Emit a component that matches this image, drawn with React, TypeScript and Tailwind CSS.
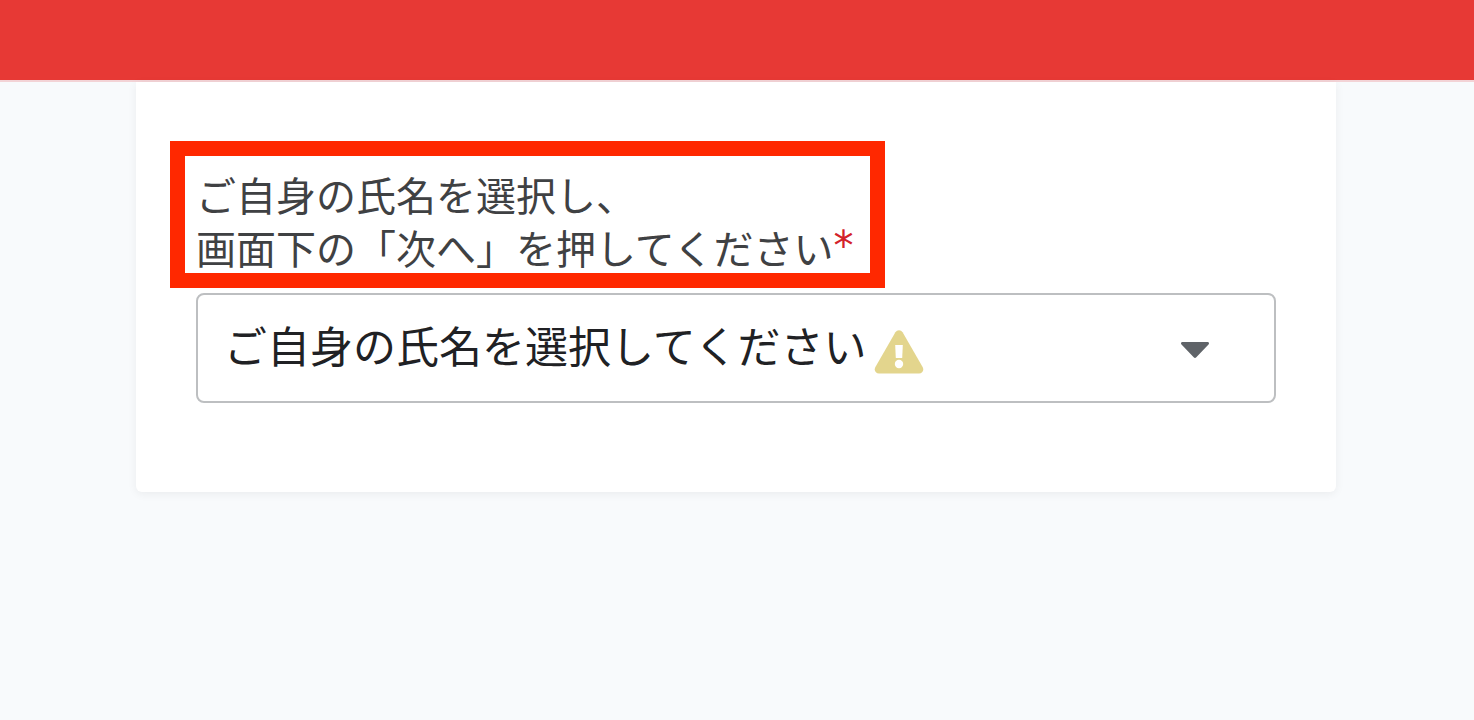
const names = ['ご自身の氏名を選択してください'];

function WarningIcon() {
  return (
    <svg viewBox="0 0 50 44" className="h-11 w-[50px]" aria-hidden="true">
      <path
        d="M21.4 2.3a4.3 4.3 0 0 1 7.2 0l20 34.8c1.8 3.2-.2 6.4-3.6 6.4H5c-3.4 0-5.4-3.2-3.6-6.4z"
        fill="#e3d58d"
      />
      <path d="M21.200 15h7.600l-.6 13h-6.400z" fill="#fff" />
      <circle cx="25" cy="34" r="4.200" fill="#fff" />
    </svg>
  );
}

function NameSelect() {
  return (
    <div className="relative">
      <select
        id="name"
        required
        className="block h-[110px] w-full appearance-none rounded-lg border-2 border-[#bdbfc1] bg-white pr-24 pb-2 pl-[26px] text-[43px] text-[#202124]"
      >
        {names.map((n) => (
          <option key={n}>{n}</option>
        ))}
      </select>
      <span className="pointer-events-none absolute top-[37px] left-[678px]">
        <WarningIcon />
      </span>
      <svg
        viewBox="0 0 28 16"
        className="pointer-events-none absolute top-[49px] right-[67px] h-4 w-7"
        aria-hidden="true"
      >
        <path d="M1.5 0h25c1.4 0 2 1.5 1 2.5L15.3 15.3a1.8 1.8 0 0 1-2.6 0L.5 2.5C-.5 1.5.1 0 1.5 0z" fill="#5f6368" />
      </svg>
    </div>
  );
}

export default function App() {
  return (
    <div className="min-h-screen bg-[#f8fafc] font-['Noto_Sans_CJK_JP',sans-serif]">
      <header className="h-[82px] border-b-2 border-[#f3d3d6] bg-[#e73935]" />

      <main className="pr-0.5">
        <form className="mx-auto max-w-[1200px] rounded-b-md bg-white px-[60px] pt-[86px] pb-[89px] shadow-[0_2px_10px_rgba(0,0,0,0.06)]">
          <div className="relative mb-[19px] w-fit">
            <label htmlFor="name" className="block text-[40px] leading-[53px] text-[#3f4143]">
              ご自身の氏名を選択し、
              <br />
              画面下の「次へ」を押してください
              <span className="align-[4px] font-['DejaVu_Sans',sans-serif] text-[40px] leading-none text-[#d3222a]">*</span>
            </label>
            {/* highlight frame */}
            <div className="pointer-events-none absolute -top-[27px] -right-[31px] -bottom-[14px] -left-[26px] border-[15px] border-[#ff2800]" />
          </div>
          <NameSelect />
        </form>
      </main>
    </div>
  );
}
